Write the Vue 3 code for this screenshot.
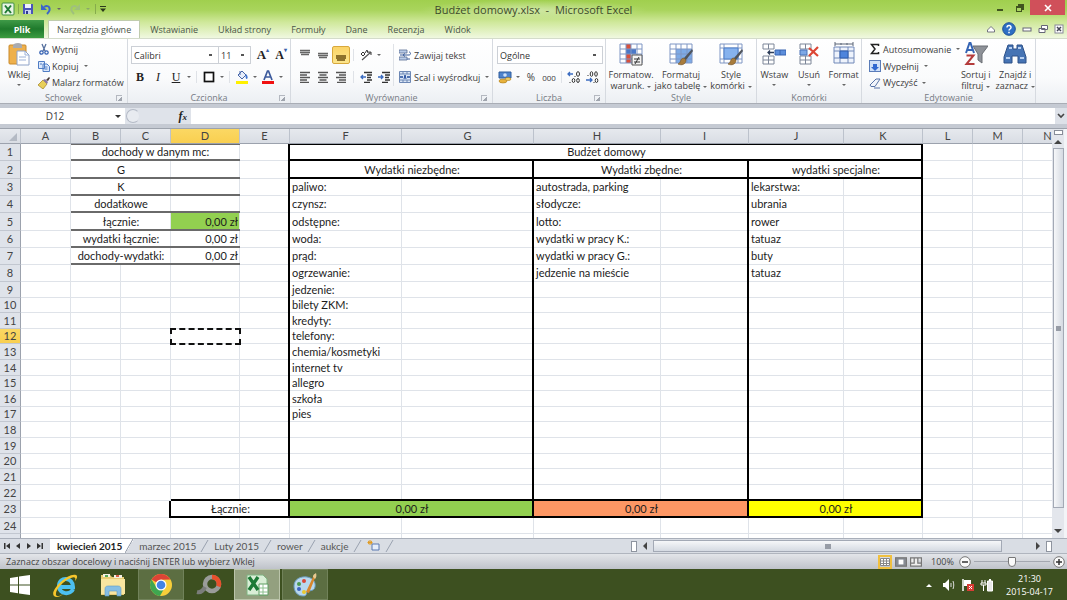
<script setup>
import { ref } from 'vue'

const menuTabs = ['Wstawianie', 'Układ strony', 'Formuły', 'Dane', 'Recenzja', 'Widok']
const sheetTabs = ['marzec 2015', 'Luty 2015', 'rower', 'aukcje']
const nameBox = ref('D12')
const formula = ref('')
const fontName = ref('Calibri')
const fontSize = ref('11')
const numberFormat = ref('Ogólne')
const zoom = ref(50)

const columns = 'ABCDEFGHIJKLMN'.split('')

const left = { 2: 'G', 3: 'K', 4: 'dodatkowe', 5: 'łącznie:', 6: 'wydatki łącznie:', 7: 'dochody-wydatki:' }
const needed = ['paliwo:', 'czynsz:', 'odstępne:', 'woda:', 'prąd:', 'ogrzewanie:', 'jedzenie:', 'bilety ZKM:', 'kredyty:', 'telefony:', 'chemia/kosmetyki', 'internet tv', 'allegro', 'szkoła', 'pies']
const extra = ['autostrada, parking', 'słodycze:', 'lotto:', 'wydatki w pracy K.:', 'wydatki w pracy G.:', 'jedzenie na mieście']
const special = ['lekarstwa:', 'ubrania', 'rower', 'tatuaz', 'buty', 'tatuaz']

const tall = [2, 5]
const low = [10, 12, 15, 17, 20]
function rowClass(n) {
  if (tall.includes(n)) return 'h18'
  if (low.includes(n)) return 'h15'
  if (n <= 8 || n === 23) return 'h17'
  return 'h16'
}

function buildRow(n) {
  const cells = [{}]
  const add = (text, span, cls) => cells.push({ text, span, cls })

  if (n === 1) add('dochody w danym mc:', 3, 'c grey-b grey-t')
  else if (n <= 7) {
    add(left[n], 2, 'c grey-b')
    add(n >= 5 ? '0,00 zł' : '', 1, n === 5 ? 'r grey-b green' : 'r grey-b')
  } else if (n === 23) {
    add('', 1, '')
    add('', 1, 'blk-r')
    add('Łącznie:', 2, 'c blk-b blk-r')
  } else {
    add('', 1, '')
    add('', 1, '')
    add('', 1, n === 12 ? 'ants' : n === 22 ? 'blk-b' : '')
  }

  if (n !== 23) add('', 1, n === 22 ? 'blk-r blk-b' : n < 23 ? 'blk-r' : '')

  if (n === 1) add('Budżet domowy', 6, 'c blk-t blk-b blk-r')
  else if (n === 2) {
    add('Wydatki niezbędne:', 2, 'c blk-b blk-r')
    add('Wydatki zbędne:', 2, 'c blk-b blk-r')
    add('wydatki specjalne:', 2, 'c blk-b blk-r')
  } else if (n === 23) {
    add('0,00 zł', 2, 'c blk-b blk-r green')
    add('0,00 zł', 2, 'c blk-b blk-r orange')
    add('0,00 zł', 2, 'c blk-b blk-r yellow')
  } else {
    const b = n === 22 ? ' blk-b' : ''
    for (const list of [needed, extra, special]) {
      add(list[n - 3] || '', 1, b)
      add('', 1, (n < 23 ? 'blk-r' : '') + b)
    }
  }
  add('', 1, '')
  add('', 1, '')
  add('', 1, '')
  return cells
}
const rows = Array.from({ length: 25 }, (_, i) => ({ n: i + 1, cls: rowClass(i + 1), cells: buildRow(i + 1) }))
</script>

<template>
  <div class="app">
    <header class="top">
      <div class="titlebar">
        <div class="quick">
          <svg class="s14" viewBox="0 0 14 14"><rect x="1" y="1" width="12" height="12" rx="1" fill="#e8f4e4" stroke="#3f8f45" /><path d="M4 3.500l6 7.500M10 3.500l-6 7.500" stroke="#1f7a34" stroke-width="2" /></svg>
          <i class="vsep"></i>
          <button aria-label="Zapisz"><svg class="s12" viewBox="0 0 12 12"><path d="M1 1h10v10H1z" fill="#4a55b8" /><path d="M3 1h6v4H3z" fill="#eef2fb" /><path d="M3 7h6v4H3z" fill="#c8d2f0" /><path d="M4 8h2v3H4z" fill="#2f3a90" /></svg></button>
          <button class="gapl" aria-label="Cofnij"><svg class="s12" viewBox="0 0 12 12"><path d="M4 4c5-3 8 2 3 7" fill="none" stroke="#3c66c8" stroke-width="2" /><path d="M1 1v6h6z" fill="#3c66c8" /></svg></button>
          <b class="dd"></b>
          <button class="gapl" aria-label="Ponów"><svg class="s12" viewBox="0 0 12 12"><path d="M8 4C3 1 0 6 5 11" fill="none" stroke="#9fc07c" stroke-width="2" /><path d="M11 1v6H5z" fill="#9fc07c" /></svg></button>
          <b class="dd pale"></b>
          <i class="vsep"></i>
          <svg class="s8" viewBox="0 0 8 8"><path d="M1 1h6v1H1zM1 3.500h6L4 7z" fill="#2c3a1c" /></svg>
        </div>
        <h1>Budżet domowy.xlsx&nbsp; - &nbsp;Microsoft Excel</h1>
        <div class="winbtns">
          <button aria-label="Minimalizuj"><svg class="s10" viewBox="0 0 10 10"><path d="M2 6h6v2H2z" fill="#40541f" /></svg></button>
          <button aria-label="Przywróć"><svg class="s10" viewBox="0 0 10 10"><path d="M3 1h6v6H7V3H3zM1 3h6v6H1z" fill="#40541f" /><path d="M2 5h4v3H2z" fill="#a9d362" /></svg></button>
          <button class="close" aria-label="Zamknij"><svg class="s10" viewBox="0 0 10 10"><path d="M2 2l6 6M8 2l-6 6" stroke="#fff" stroke-width="1.600" /></svg></button>
        </div>
      </div>
      <nav class="menu">
        <button class="file">Plik</button>
        <button class="tab active">Narzędzia główne</button>
        <button v-for="t in menuTabs" :key="t" class="tab">{{ t }}</button>
        <div class="docbtns">
          <svg class="s10" viewBox="0 0 10 10"><path d="M1.500 6L5 2.500 8.500 6v2h-7z" fill="#fff" stroke="#667" stroke-width=".9" /></svg>
          <svg class="s14" viewBox="0 0 14 14"><circle cx="7" cy="7" r="6.300" fill="#2e6fc4" stroke="#1d4f96" /><path d="M5 5.500c0-3 4.200-2.600 4 0 0 1.500-2 1.500-2 3M7 9.800v1.400" fill="none" stroke="#fff" stroke-width="1.500" /></svg>
          <svg class="s10" viewBox="0 0 10 10"><rect x="1" y="4" width="8" height="3" fill="#fff" stroke="#667" /></svg>
          <svg class="s10" viewBox="0 0 10 10"><path d="M3.500 1.500h6v4h-6zM1 4.500h6v4H1z" fill="#fff" stroke="#667" /></svg>
          <svg class="s10" viewBox="0 0 10 10"><rect x="1" y="1" width="8" height="8" fill="#fff" stroke="#889" /><path d="M3 3l4 4M7 3L3 7" stroke="#445" stroke-width="1.500" /></svg>
        </div>
      </nav>
    </header>

    <section class="ribbon">
      <div class="group g-clip">
        <div class="body">
          <button class="big">
            <svg class="s24" viewBox="0 0 24 24"><rect x="2" y="3" width="17" height="19" rx="1" fill="#eeb04c" stroke="#c98a2c" /><path d="M6 4c0-2 2-3 5-3s4 1 4 3v2H6z" fill="#a9abb0" /><path d="M10 9h8l4 4v10H10z" fill="#fff" stroke="#8ea2c8" /><path d="M18 9v4h4M12 15h7M12 18h7" fill="none" stroke="#9db2d8" /></svg>
            <span>Wklej</span><b class="dd"></b>
          </button>
          <div class="stack">
            <button><svg class="s12" viewBox="0 0 12 12"><path d="M4 1l3 7M8 1L5 8" stroke="#56709e" stroke-width="1.300" /><circle cx="3.500" cy="9.500" r="1.700" fill="none" stroke="#2e5cb0" stroke-width="1.200" /><circle cx="8.500" cy="9.500" r="1.700" fill="none" stroke="#2e5cb0" stroke-width="1.200" /></svg>Wytnij</button>
            <button><svg class="s12" viewBox="0 0 12 12"><path d="M.5 1.500h6v7h-6zM5 4h4l2.500 2.500v5H5z" fill="#dbe8fb" stroke="#4f7cc4" /><path d="M6.500 7h3M6.500 9h3M2 4h2" stroke="#4f7cc4" /></svg>Kopiuj<b class="dd"></b></button>
            <button><svg class="s12" viewBox="0 0 12 12"><path d="M0 8l5-5 4 4-4 5z" fill="#e8cf5a" stroke="#a08020" stroke-width=".7" /><path d="M5 3l2-1 3 3-1 2z" fill="#8a78a8" /><path d="M8 3l3-3 1 1-2 3z" fill="#4a3c38" /></svg>Malarz formatów</button>
          </div>
        </div>
        <footer>Schowek<i class="launch"></i></footer>
      </div>

      <div class="group g-font">
        <div class="body rows">
          <div class="line">
            <select v-model="fontName" class="combo w-font" aria-label="Czcionka"><option>Calibri</option></select>
            <select v-model="fontSize" class="combo w-size" aria-label="Rozmiar"><option>11</option></select>
            <button class="w18 serif grow">A<sup>▴</sup></button>
            <button class="w18 serif shrink">A<sup>▾</sup></button>
          </div>
          <div class="line">
            <button class="w18 serif"><b>B</b></button>
            <button class="w18 serif"><em>I</em></button>
            <button class="w18 serif"><u>U</u></button>
            <b class="dd"></b><i class="sep"></i>
            <button class="w18" aria-label="Obramowanie"><svg class="s12" viewBox="0 0 12 12"><rect x="1.500" y="1.500" width="9" height="9" fill="#fff" stroke="#111" stroke-width="1.700" /></svg></button>
            <b class="dd"></b><i class="sep"></i>
            <button class="w18" aria-label="Kolor wypełnienia"><svg class="s14" viewBox="0 0 14 14"><path d="M3 5l4-4 4 4-4 4z" fill="#e8eefb" stroke="#4766a8" /><path d="M11 4c2 2 2 4 1 5-1 0-2-1-1-5" fill="#3e73d0" /><path d="M5 1v4" stroke="#4766a8" /><rect x="1" y="11" width="12" height="3" fill="#fff000" /></svg></button>
            <b class="dd"></b>
            <button class="w18" aria-label="Kolor czcionki"><svg class="s14" viewBox="0 0 14 14"><path d="M3 10l3.500-9h1L11 10M4.500 7h5" fill="none" stroke="#3c5a9c" stroke-width="1.700" /><rect x="1" y="11" width="12" height="3" fill="#f01010" /></svg></button>
            <b class="dd"></b>
          </div>
        </div>
        <footer>Czcionka<i class="launch"></i></footer>
      </div>

      <div class="group g-align">
        <div class="body cols">
          <div class="rows">
            <div class="line">
              <button class="w18" aria-label="Do góry"><svg class="s12" viewBox="0 0 12 12"><path d="M1 1.500h10M1 3.500h10M2 5.500h8" stroke="#666" stroke-width="1.600" /></svg></button>
              <button class="w18" aria-label="Do środka"><svg class="s12" viewBox="0 0 12 12"><path d="M1 4.500h10M1 6.500h10M2 8.500h8" stroke="#666" stroke-width="1.600" /></svg></button>
              <button class="w18 on" aria-label="Do dołu"><svg class="s12" viewBox="0 0 12 12"><path d="M1 7h10M1 9h10M2 11h8" stroke="#6a4e10" stroke-width="1.600" /></svg></button>
              <i class="sep"></i>
              <button class="w18" aria-label="Orientacja"><svg class="s12" viewBox="0 0 12 12"><path d="M2 11l9-8M11 3H8M11 3v3" fill="none" stroke="#555" stroke-width="1.200" /><path d="M1 5l2-2 2 2-2 2zM5 4l2-3 1 3" fill="none" stroke="#333" /></svg></button>
              <b class="dd"></b>
            </div>
            <div class="line">
              <button class="w18" aria-label="Do lewej"><svg class="s12" viewBox="0 0 12 12"><path d="M1 1.500h10M1 4h7M1 6.500h10M1 9h7M1 11.500h9" stroke="#555" stroke-width="1.400" /></svg></button>
              <button class="w18" aria-label="Wyśrodkuj"><svg class="s12" viewBox="0 0 12 12"><path d="M1 1.500h10M2.500 4h7M1 6.500h10M2.500 9h7M1 11.500h10" stroke="#555" stroke-width="1.400" /></svg></button>
              <button class="w18" aria-label="Do prawej"><svg class="s12" viewBox="0 0 12 12"><path d="M1 1.500h10M4 4h7M1 6.500h10M4 9h7M2 11.500h9" stroke="#555" stroke-width="1.400" /></svg></button>
              <i class="sep"></i>
              <button class="w18" aria-label="Zmniejsz wcięcie"><svg class="s12" viewBox="0 0 12 12"><path d="M4 1.500h8M7 4h5M7 6.500h4M7 9h5M4 11.500h6" stroke="#333" stroke-width="1.400" /><path d="M6 6H1M3 4L1 6l2 2" fill="none" stroke="#3a6bc0" stroke-width="1.300" /></svg></button>
              <button class="w18" aria-label="Zwiększ wcięcie"><svg class="s12" viewBox="0 0 12 12"><path d="M4 1.500h8M7 4h5M7 6.500h4M7 9h5M4 11.500h6" stroke="#333" stroke-width="1.400" /><path d="M0 6h5M3 4l2 2-2 2" fill="none" stroke="#3a6bc0" stroke-width="1.300" /></svg></button>
            </div>
          </div>
          <i class="sep tallsep"></i>
          <div class="rows">
            <button class="line txt"><svg class="s12" viewBox="0 0 12 12"><path d="M0 1h8v3H0zM0 8h8v3H0z" fill="#b8cbe8" stroke="#5b6f94" stroke-width=".8" /><path d="M1 6h9c2 0 2-3 0-3M8 10h3M6 4.500L4 6l2 1.500" fill="none" stroke="#3c5f9c" /></svg>Zawijaj tekst</button>
            <button class="line txt"><svg class="s12" viewBox="0 0 12 12"><path d="M.5.500h11v11H.500zM0 3h12M0 9h12M4 0v3M8 0v3M4 9v3M8 9v3" fill="#dbe6f6" stroke="#6c87b4" /><path d="M1 6h3M8 6h3" stroke="#224c9c" stroke-width="1.400" /><path d="M5 8l1-4 1 4" fill="none" stroke="#224c9c" /></svg>Scal i wyśrodkuj<b class="dd"></b></button>
          </div>
        </div>
        <footer>Wyrównanie<i class="launch"></i></footer>
      </div>

      <div class="group g-num">
        <div class="body rows">
          <div class="line"><select v-model="numberFormat" class="combo wide" aria-label="Format liczb"><option>Ogólne</option></select></div>
          <div class="line">
            <button class="w18" aria-label="Format księgowy"><svg class="s14" viewBox="0 0 14 14"><path d="M1 2h12v6H1z" fill="#4f83cc" stroke="#2e5c9c" /><circle cx="7" cy="5" r="1.800" fill="#cfe0f6" /><ellipse cx="5" cy="11" rx="4" ry="2" fill="#e8b23c" stroke="#a87818" stroke-width=".6" /><ellipse cx="10" cy="9" rx="3" ry="1.500" fill="#f2cf6a" stroke="#a87818" stroke-width=".6" /></svg></button>
            <b class="dd"></b>
            <button class="w18 num">%</button>
            <button class="w18 num small">000</button>
            <i class="sep"></i>
            <button class="w18" aria-label="Zwiększ dziesiętne"><svg class="s14" viewBox="0 0 14 14"><path d="M6 4H1M3 2L1 4l2 2" fill="none" stroke="#3a6bc0" stroke-width="1.300" /><path d="M8 6V7" stroke="#333" /><ellipse cx="11" cy="4" rx="1.500" ry="2.300" fill="none" stroke="#333" /><ellipse cx="6.500" cy="10.500" rx="1.300" ry="2" fill="none" stroke="#333" /><ellipse cx="11" cy="10.500" rx="1.300" ry="2" fill="none" stroke="#333" /><path d="M3 12v1" stroke="#333" /></svg></button>
            <button class="w18" aria-label="Zmniejsz dziesiętne"><svg class="s14" viewBox="0 0 14 14"><path d="M1 10h6M5 8l2 2-2 2" fill="none" stroke="#3a6bc0" stroke-width="1.300" /><ellipse cx="6.500" cy="4" rx="1.300" ry="2.300" fill="none" stroke="#333" /><ellipse cx="11" cy="4" rx="1.300" ry="2.300" fill="none" stroke="#333" /><ellipse cx="11.500" cy="10.500" rx="1.300" ry="2" fill="none" stroke="#333" /><path d="M3 5v1M9 12v1" stroke="#333" /></svg></button>
          </div>
        </div>
        <footer>Liczba<i class="launch"></i></footer>
      </div>

      <div class="group g-style">
        <div class="body">
          <button class="big"><svg class="s24" viewBox="0 0 24 24"><path d="M1 2h22v19H1z" fill="#fff" /><path d="M7 2h5v5H7zM7 12h5v9H7z" fill="#d8503c" /><path d="M7 7h10v5H7z" fill="#4a78c8" /><path d="M1 2h22v19H1zM1 7h22M1 12h22M1 17h22M7 2v19M12 2v19M18 2v19" fill="none" stroke="#7e96c4" /><path d="M13 13h10v10H13z" fill="#f4f4f4" stroke="#555" /><path d="M15 17h6M15 20h6M20 15l-4 7" stroke="#333" /></svg><span>Formatow.</span><span>warunk.<b class="dd"></b></span></button>
          <button class="big"><svg class="s24" viewBox="0 0 24 24"><path d="M1 2h22v19H1z" fill="#fff" /><path d="M7 7h16v14H7z" fill="#7daae6" /><path d="M1 2h22v19H1zM1 7h22M1 12h22M1 17h22M7 2v19M12 2v19M18 2v19" fill="none" stroke="#7e96c4" /><path d="M23 7l-8 9 2 2 7-9z" fill="#50555e" /><path d="M15 16c-4 0-3 5-6 6 4 2 8 0 8-4z" fill="#a87c3c" stroke="#6a4c20" stroke-width=".6" /></svg><span>Formatuj</span><span>jako tabelę<b class="dd"></b></span></button>
          <button class="big"><svg class="s24" viewBox="0 0 24 24"><path d="M1 2h22v19H1z" fill="#fff" /><path d="M1 2h22v19H1zM1 6h22M1 17h22M5 2v19M19 2v19" fill="none" stroke="#7e96c4" /><path d="M5 6h14v11H5z" fill="#86b2ee" stroke="#4f7fc8" /><path d="M23 7l-8 9 2 2 7-9z" fill="#50555e" /><path d="M15 16c-4 0-3 5-6 6 4 2 8 0 8-4z" fill="#a87c3c" stroke="#6a4c20" stroke-width=".6" /></svg><span>Style</span><span>komórki<b class="dd"></b></span></button>
        </div>
        <footer>Style</footer>
      </div>

      <div class="group g-cells">
        <div class="body">
          <button class="big"><svg class="s24" viewBox="0 0 24 24"><path d="M1 2h11v5H1zM6.500 2v5M1 14h11v8H1zM1 18h11M6.500 14v8" fill="#fff" stroke="#7c8698" /><path d="M13 8h11v5H13zM18 8v5" fill="#5c8edb" stroke="#3864b0" /><path d="M12 10.500H6M8 8.500l-2 2 2 2" fill="none" stroke="#2c3c58" stroke-width="1.300" /></svg><span>Wstaw</span><b class="dd"></b></button>
          <button class="big"><svg class="s24" viewBox="0 0 24 24"><path d="M3 2h11v5H3zM8.500 2v5M3 14h11v8H3zM3 18h11M8.500 14v8" fill="#fff" stroke="#7c8698" /><path d="M3 8h7v5H3z" fill="#7da8e6" stroke="#4a72b8" /><path d="M12 6l9 8M21 5l-9 9" stroke="#dc4634" stroke-width="2.200" /></svg><span>Usuń</span><b class="dd"></b></button>
          <button class="big"><svg class="s24" viewBox="0 0 24 24"><path d="M2 5h20v16H2zM2 9h20M2 16h20M8 5v16M16 5v16" fill="#eef3fc" stroke="#7088b8" /><path d="M8 9h8v7H8z" fill="#4e84dc" stroke="#2e5cac" /><path d="M3 2h18M3 0v4M21 0v4M9 1v2M15 1v2" stroke="#5c6678" /></svg><span>Format</span><b class="dd"></b></button>
        </div>
        <footer>Komórki</footer>
      </div>

      <div class="group g-edit">
        <div class="body">
          <div class="stack">
            <button><svg class="s12" viewBox="0 0 12 12"><path d="M9.500 3V1.500H2.500L6 6l-3.500 4.500h7V9" fill="none" stroke="#222" stroke-width="1.500" /></svg>Autosumowanie<b class="dd"></b></button>
            <button><svg class="s12" viewBox="0 0 12 12"><rect x=".5" y=".5" width="11" height="11" fill="#cfe0f8" stroke="#5a7cb8" /><path d="M4 4h4v3h2L6 11 2 7h2z" fill="#2f68d0" /></svg>Wypełnij<b class="dd"></b></button>
            <button><svg class="s12" viewBox="0 0 12 12"><path d="M1 8l6-6h4L6 9.500H2z" fill="#f2f5fb" stroke="#5874a8" /><path d="M5 11h6" stroke="#5874a8" /></svg>Wyczyść<b class="dd"></b></button>
          </div>
          <button class="big"><svg class="s24" viewBox="0 0 24 24"><path d="M9 4h15l-6 8v9l-4-3v-6z" fill="#8e9298" stroke="#6a6e74" /><path d="M2 11L5.500 1h1L10 11M3.500 8h5" fill="none" stroke="#3464b4" stroke-width="2" /><path d="M2.500 13.500h7L2.500 22h8" fill="none" stroke="#b43c3c" stroke-width="2" /></svg><span>Sortuj i</span><span>filtruj<b class="dd"></b></span></button>
          <button class="big"><svg class="s24" viewBox="0 0 24 24"><path d="M5 3h5v4h4V3h5l4 12v6h-8v-7H9v7H1v-6z" fill="#4674b4" stroke="#2c5088" /><path d="M3 16h4M17 16h4M6 6h3M15 6h3" stroke="#b8d0f0" stroke-width="2" /></svg><span>Znajdź i</span><span>zaznacz<b class="dd"></b></span></button>
        </div>
        <footer>Edytowanie</footer>
      </div>
    </section>

    <section class="formulabar">
      <input v-model="nameBox" class="namebox" aria-label="Pole nazwy" /><div class="nd"><b class="dd dark"></b></div>
      <div class="fxzone"><i class="knob"></i><span class="fx">f<small>x</small></span></div>
      <input v-model="formula" class="fxinput" aria-label="Pasek formuły" />
      <button class="expand" aria-label="Rozwiń"><svg class="s8" viewBox="0 0 8 8"><path d="M1 2l3 3 3-3" fill="none" stroke="#444" stroke-width="1.600" /></svg></button>
    </section>

    <main class="sheet">
      <div class="gridwrap">
        <table>
          <colgroup>
            <col class="k21" /><col class="k50" /><col class="k50" /><col class="k50" /><col class="k69" /><col class="k50" />
            <col class="k112" /><col class="k132" /><col class="k127" /><col class="k88" /><col class="k95" /><col class="k79" />
            <col class="k50" /><col class="k50" /><col class="k50" />
          </colgroup>
          <thead>
            <tr>
              <th class="corner"><svg class="s8" viewBox="0 0 8 8"><path d="M8 0v8H0z" fill="#b4bac4" /></svg></th>
              <th v-for="c in columns" :key="c" :class="{ sel: c === 'D' }">{{ c }}</th>
            </tr>
          </thead>
          <tbody>
            <tr v-for="r in rows" :key="r.n" :class="r.cls">
              <th :class="{ sel: r.n === 12 }">{{ r.n }}</th>
              <td v-for="(c, i) in r.cells" :key="i" :colspan="c.span || 1" :class="c.cls">{{ c.text }}</td>
            </tr>
          </tbody>
        </table>
      </div>
      <div class="vscroll">
        <i class="split"></i>
        <svg class="s10" viewBox="0 0 10 10"><path d="M1 7l4-4 4 4z" fill="#444" /></svg>
        <div class="vthumb"><i></i></div>
        <svg class="s10 down" viewBox="0 0 10 10"><path d="M1 3l4 4 4-4z" fill="#444" /></svg>
      </div>
    </main>

    <section class="tabsbar">
      <div class="navs">
        <button aria-label="Pierwszy"><svg class="s8" viewBox="0 0 8 8"><path d="M1 1h1.500v6H1zM7 1v6L3 4z" fill="#333" /></svg></button>
        <button aria-label="Poprzedni"><svg class="s8" viewBox="0 0 8 8"><path d="M6 1v6L2 4z" fill="#333" /></svg></button>
        <button aria-label="Następny"><svg class="s8" viewBox="0 0 8 8"><path d="M2 1v6l4-3z" fill="#333" /></svg></button>
        <button aria-label="Ostatni"><svg class="s8" viewBox="0 0 8 8"><path d="M1 1v6l4-3zM5.500 1H7v6H5.500z" fill="#333" /></svg></button>
      </div>
      <button class="stab cur">kwiecień 2015</button>
      <svg class="slant" viewBox="0 0 10 14"><path d="M0 14L8 0" stroke="#8e96a4" /></svg>
      <template v-for="t in sheetTabs" :key="t">
        <button class="stab">{{ t }}</button>
        <svg class="slant" viewBox="0 0 10 14"><path d="M1 13L8 1" stroke="#9aa2b0" /></svg>
      </template>
      <button class="stab" aria-label="Wstaw arkusz"><svg class="s14" viewBox="0 0 14 14"><path d="M5 5h7v6H5z" fill="#e6eefb" stroke="#5a78b0" /><path d="M3 1v5M.5 3.500h5M1 2l4 3M5 2L1 5" stroke="#e09a20" /></svg></button>
      <svg class="slant" viewBox="0 0 10 14"><path d="M1 13L8 1" stroke="#9aa2b0" /></svg>
      <div class="hscroll">
        <i class="grab"></i>
        <svg class="s10" viewBox="0 0 10 10"><path d="M7 1v8L3 5z" fill="#444" /></svg>
        <div class="htrack"><div class="hthumb"><i></i></div></div>
        <svg class="s10" viewBox="0 0 10 10"><path d="M3 1v8l4-4z" fill="#444" /></svg>
        <i class="grab"></i>
      </div>
    </section>

    <footer class="status">
      <span>Zaznacz obszar docelowy i naciśnij ENTER lub wybierz Wklej</span>
      <div class="views">
        <button class="von" aria-label="Normalny"><svg class="s10" viewBox="0 0 10 10"><path d="M.5 1.500h9v7h-9zM0 4h10M0 6.500h10M3.500 1v8M6.500 1v8" fill="#fff" stroke="#888" /></svg></button>
        <button aria-label="Układ strony"><svg class="s12" viewBox="0 0 10 10"><rect x=".5" y="1.500" width="9" height="7" fill="#888c94" stroke="#777" /><rect x="3" y="3" width="4" height="4" fill="#fff" /></svg></button>
        <button aria-label="Podział stron"><svg class="s12" viewBox="0 0 10 10"><path d="M.5 1.500h9v7h-9zM3.500 1v5H0M6.500 1v5H10" fill="#eee" stroke="#777" /></svg></button>
        <span class="pct">100%</span>
        <button aria-label="Pomniejsz"><svg class="s12" viewBox="0 0 12 12"><circle cx="6" cy="6" r="5.300" fill="#fafafa" stroke="#777" /><path d="M3 6h6" stroke="#333" stroke-width="1.500" /></svg></button>
        <input v-model="zoom" type="range" min="0" max="100" aria-label="Powiększenie" />
        <button aria-label="Powiększ"><svg class="s12" viewBox="0 0 12 12"><circle cx="6" cy="6" r="5.300" fill="#fafafa" stroke="#777" /><path d="M3 6h6M6 3v6" stroke="#333" stroke-width="1.500" /></svg></button>
      </div>
    </footer>

    <footer class="taskbar">
      <button aria-label="Start"><svg class="s24" viewBox="0 0 24 24"><path d="M2 5l8-1.200V11.500H2zM11 3.600L22 2v9.500H11zM2 12.500h8v7.700L2 19zM11 12.500h11V22l-11-1.600z" fill="#fff" /></svg></button>
      <button aria-label="Internet Explorer"><svg class="s28" viewBox="0 0 28 28"><path d="M22 18c-2 6-14 6-14-3 0-10 14-9 14 1H9" fill="none" stroke="#4cc0f0" stroke-width="4" /><path d="M3 25c-5-5 14-24 22-21 2 1 1 4-1 6 1-3 0-5-4-3C12 10 4 19 5 24c1 2 4 1 7-1-3 3-7 4-9 2z" fill="#f6c62c" /></svg></button>
      <button aria-label="Eksplorator"><svg class="s28" viewBox="0 0 28 28"><path d="M2 4h9l2 2h12v18H2z" fill="#e9cd74" /><path d="M4 3h7v3H4zM15 4h8v3h-8z" fill="#f4f1e4" /><path d="M6 4h3v2H6z" fill="#58a858" /><path d="M17 4h3v2h-3z" fill="#d86048" /><path d="M2 8h24v15H2z" fill="#f8e6a0" /><path d="M6 25v-7c0-2 1-3 3-3h10c2 0 3 1 3 3v7h-4v-5h-8v5z" fill="#86bfe4" stroke="#5c9cc8" stroke-width=".6" /></svg></button>
      <button class="tile" aria-label="Chrome"><svg class="s24" viewBox="0 0 24 24"><circle cx="12" cy="12" r="11" fill="#f7ce3a" /><path d="M12 12L2.500 6.500A11 11 0 0 1 21.500 6.500L12 6.800z" fill="#dc4436" /><path d="M2.500 6.500A11 11 0 0 0 11 23l5-9-8 1z" fill="#3fa650" /><circle cx="12" cy="12" r="5.500" fill="#fff" /><circle cx="12" cy="12" r="4.300" fill="#4284e4" /></svg></button>
      <button aria-label="Program"><svg class="s28" viewBox="0 0 28 28"><circle cx="17" cy="13" r="7" fill="none" stroke="#9a9c9a" stroke-width="4.500" /><path d="M17 6a7 7 0 0 1 6.500 9.500" fill="none" stroke="#e8502c" stroke-width="4.500" /><path d="M2 21c4 1 6-1 8-5" fill="none" stroke="#7b7d7a" stroke-width="4" /></svg></button>
      <button class="tile act" aria-label="Excel"><svg class="s24" viewBox="0 0 24 24"><path d="M2 2h16l4 4v16H2z" fill="#d9eed6" stroke="#7fb482" /><path d="M14 11h9v11h-9z" fill="#fff" stroke="#5c9c60" /><path d="M14 15h9M14 19h9M18 11v11" stroke="#8cc08e" /><path d="M4 4l9 13M13 4L4 17" stroke="#1d7a36" stroke-width="3.400" /></svg></button>
      <button class="tile" aria-label="Paint"><svg class="s24" viewBox="0 0 24 24"><path d="M1 13C1 6 8 3 14 4s9 5 8 10-7 3-8 5 0 4-4 4c-6 0-9-5-9-10z" fill="#b8d8ee" stroke="#6a9cc0" /><circle cx="6" cy="11" r="2" fill="#4c9a50" /><circle cx="11" cy="8" r="2" fill="#d84838" /><circle cx="6" cy="16" r="2" fill="#3c64c0" /><circle cx="11" cy="19" r="2" fill="#e8c830" /><path d="M13 19L20 4l2 1-6 15z" fill="#d8862c" /><path d="M20 4c0-3 2-3 3-4 1 3 0 5-1 6z" fill="#e8c890" /></svg></button>
      <div class="tray">
        <svg class="s8" viewBox="0 0 8 8"><path d="M1 6l3-3 3 3z" fill="#fff" /></svg>
        <svg class="s14 spk" viewBox="0 0 14 14"><path d="M1 5h2l4-4v12L3 9H1z" fill="#fff" /><path d="M9 5v4M11 3c1 3 1 5 0 8" fill="none" stroke="#ddd" /></svg>
        <svg class="s14" viewBox="0 0 14 14"><path d="M2 1v12" stroke="#fff" stroke-width="1.500" /><path d="M3 2h7v6H3z" fill="#fff" /><rect x="6" y="6" width="7" height="7" fill="#d83c34" /><path d="M8 8l3 3M11 8l-3 3" stroke="#fff" /></svg>
        <svg class="s14" viewBox="0 0 14 14"><path d="M2 2v3M5 2v3M1 5h5v2H1zM3.500 7v6" fill="none" stroke="#fff" /><path d="M7.500 3h5v10h-5z" fill="#e8e8e8" stroke="#fff" /><path d="M9 1h2v2H9z" fill="#fff" /></svg>
        <div class="clock"><span>21:30</span><span>2015-04-17</span></div>
      </div>
    </footer>
  </div>
</template>

<style>
html, body { margin: 0; overflow: hidden; }
</style>

<style scoped>
.app { height: 100vh; display: flex; flex-direction: column; font-family: "Open Sans", "Noto Sans", sans-serif; font-size: 9px; color: #3c3c3c; background: #fff; }
.app * { box-sizing: border-box; }
button { border: 0; background: none; padding: 0; margin: 0; font: inherit; color: inherit; display: flex; align-items: center; white-space: nowrap; }
input { font: inherit; color: inherit; border: 0; margin: 0; padding: 0; min-width: 0; outline: 0; }
svg { display: block; flex: none; }
.s8 { width: 8px; height: 8px; }
.s10 { width: 10px; height: 10px; }
.s12 { width: 12px; height: 12px; }
.s14 { width: 14px; height: 14px; }
.s24 { width: 24px; height: 24px; }
.s28 { width: 28px; height: 28px; }
.dd { display: inline-block; flex: none; border: 2px solid transparent; border-top-color: #666; border-bottom: 0; margin: 0 3px; vertical-align: middle; }
.dd.dark { border-width: 3px; border-top-color: #333; border-bottom: 0; margin: 0; }
.dd.pale { border-top-color: #8aa86a; }

.top { flex: none; background: linear-gradient(#a0cf4e 0, #a9d45c 10px, #cfe89a 22px, #f0f8e0 38px); }
.titlebar { height: 20px; display: grid; grid-template-columns: 1fr auto 1fr; align-items: start; }
.quick { display: flex; align-items: center; gap: 3px; padding: 2px 0 0 1px; }
.quick .dd { margin: 0 2px; }
.gapl { margin-left: 3px; }
.vsep { width: 1px; height: 10px; background: #86ac4c; }
h1 { margin: 0; font-size: 11px; font-weight: 400; line-height: 20px; color: #3d4a2c; padding: 0 16px; background: radial-gradient(closest-side, #ffffff70, #ffffff00); }
.winbtns { display: flex; justify-content: flex-end; padding-right: 2px; }
.winbtns button { width: 20px; height: 15px; justify-content: center; }
.winbtns .close { width: 35px; background: #d0505a; }
.menu { display: flex; height: 18px; }
.file { width: 44px; justify-content: center; color: #fff; font-weight: 700; background: linear-gradient(#3f9a48, #1f7a2c 50%, #3c9c40); margin-right: 4px; }
.tab { padding: 0 10px; color: #4a5548; }
.tab.active { background: #fff; padding: 0 8px; border: 1px solid #c0ccae; border-bottom: 0; }
.docbtns { margin-left: auto; display: flex; align-items: center; gap: 6px; padding-right: 3px; }

.ribbon { flex: none; height: 66px; display: flex; background: linear-gradient(#fff, #fafbfc 60%, #eceff3); border-top: 1px solid #d4dccb; border-bottom: 1px solid #a9adb5; }
.group { flex: none; border-right: 1px solid #d6dae0; display: flex; flex-direction: column; }
.group footer { height: 12px; line-height: 13px; text-align: center; color: #767b84; display: grid; grid-template-columns: 1fr auto 1fr; }
.group footer::before { content: ""; }
.launch { width: 6px; height: 6px; border: 1px solid #b4b8c0; border-width: 1px 0 0 1px; justify-self: end; align-self: center; margin-right: 5px; background: linear-gradient(135deg, transparent 60%, #a0a5ae 60%); }
.body { flex: 1; display: flex; min-height: 0; padding-top: 2px; }
.g-clip { width: 128px; }
.g-font { width: 163px; }
.g-align { width: 202px; }
.g-num { width: 113px; }
.g-style { width: 151px; }
.g-cells { width: 105px; }
.g-edit { width: 174px; }
.big { flex: 1; flex-direction: column; line-height: 11px; min-width: 0; }
.big svg { margin: 1px 0 3px; }
.big > .dd { margin-top: 4px; }
.big span { display: block; height: 11px; }
.big span .dd { margin-right: 0; }
.g-clip .big { flex: none; width: 38px; }
.stack { display: flex; flex-direction: column; }
.stack button { height: 17px; gap: 2px; }
.g-edit .stack { width: 94px; padding-left: 7px; }
.rows { flex-direction: column; padding-top: 5px; }
.rows.body { padding: 7px 0 0 3px; }
.body.cols { padding: 2px 0 0 5px; }
.line { display: flex; align-items: center; height: 18px; margin-bottom: 4px; }
.line .dd { margin: 0 2px; }
.line.txt { gap: 3px; }
.combo { appearance: none; border: 1px solid #ccd0d6; border-radius: 0; height: 18px; font: inherit; color: #333; margin: 0; padding: 0 2px; background: #fff linear-gradient(#555, #555) no-repeat right 6px center / 3px 2px; outline: 0; }
.w-font { width: 88px; }
.w-size { width: 33px; margin-left: -1px; }
.combo.wide { width: 106px; margin-left: 1px; }
.w18 { width: 18px; height: 18px; justify-content: center; }
.serif { font-family: "Liberation Serif", serif; font-size: 12px; color: #222; }
.grow { font-size: 13px; font-weight: 700; margin-left: 3px; }
.shrink { font-weight: 700; }
.serif sup { font-size: 6px; align-self: flex-start; line-height: 8px; color: #3a62ac; }
.sep { width: 1px; height: 12px; background: #dfe2e7; margin: 0 3px; flex: none; }
.tallsep { height: 42px; margin: 3px 5px 0 auto; }
.cols .rows:last-child { width: 93px; flex: none; }
.on { background: linear-gradient(#fbd467, #fce58c); border: 1px solid #d8a83c; border-radius: 2px; }
.num { font-size: 10px; }
.num.small { font-size: 8px; }

.formulabar { flex: none; height: 24px; display: flex; padding: 4px 0; background: #c5cad3; }
.namebox { width: 110px; text-align: center; background: #fff; font-size: 10px; }
.nd { width: 15px; background: #fff; display: flex; align-items: center; justify-content: center; }
.fxzone { width: 66px; background: #dfe3ea; display: flex; align-items: center; justify-content: space-between; padding: 0 4px 0 1px; }
.knob { width: 14px; height: 14px; border: 1px solid #b4bac6; border-right-color: #dfe3ea; border-radius: 7px; background: #e8ebf0; }
.fx { font: italic 700 12px "Liberation Serif", serif; color: #222; }
.fx small { font-size: 9px; }
.fxinput { flex: 1; background: #fff; }
.expand { width: 12px; justify-content: center; background: #dde1e8; }

.sheet { flex: 1 1 0; min-height: 0; display: flex; border-top: 1px solid #9da3ad; }
.gridwrap { flex: 1; min-width: 0; overflow: hidden; background: #fff; }
table { table-layout: fixed; width: 1073px; border-collapse: separate; border-spacing: 0; font-family: Lato, "Noto Sans", sans-serif; font-size: 11px; line-height: 13px; color: #1c1c1c; }
.k21 { width: 21px; } .k50 { width: 50px; } .k69 { width: 69px; } .k112 { width: 112px; } .k132 { width: 132px; }
.k127 { width: 127px; } .k88 { width: 88px; } .k95 { width: 95px; } .k79 { width: 79px; }
th { font-weight: 400; color: #444; padding: 0 0 1px; background: #dfe3ea; border-right: 1px solid #bcc2cc; border-bottom: 1px solid #c2c7d0; }
thead th { height: 15px; border-bottom-color: #9ca2ad; background: linear-gradient(#e6e9ee, #d9dde4); }
tbody th { border-right-color: #9ca2ad; }
th.sel { background: linear-gradient(#fbd863, #f9cf50); }
thead .corner svg { margin: 2px 3px 0 auto; }
td {
  --right: inset 0 0 transparent;
  --bottom: inset 0 0 transparent;
  --top: inset 0 0 transparent;
  padding: 0 2px 2px;
  white-space: nowrap;
  box-shadow: var(--right), var(--bottom), var(--top), inset -1px 0 #dfe3e9, inset 0 -1px #dfe3e9;
}
.h15 { height: 15px; } .h16 { height: 16px; } .h17 { height: 17px; } .h18 { height: 18px; }
.c { text-align: center; }
.r { text-align: right; }
.grey-b { --bottom: inset 0 -2px #6a6a6a; }
.grey-t { --top: inset 0 1px #6a6a6a; }
.blk-b { --bottom: inset 0 -2px #000; }
.blk-t { --top: inset 0 1px #000; }
.blk-r { --right: inset -2px 0 #000; }
.green { background: #92d050; }
.orange { background: #fd9764; }
.yellow { background: #ff0; }
.ants { outline: 2px dashed #111; outline-offset: -1px; }
.vscroll { width: 15px; flex: none; background: #e3e6ec; border-right: 3px solid #f2f4f7; display: flex; flex-direction: column; align-items: center; }
.split { width: 9px; height: 5px; border: 1px solid #888e99; background: #fff; margin: 1px 0 2px; }
.vthumb { width: 11px; flex: 1; margin: 1px 0 18px; border: 1px solid #a3a9b5; background: linear-gradient(90deg, #f6f7f9, #d5dae2); display: flex; align-items: center; justify-content: center; }
.vthumb i { width: 5px; height: 5px; background: #979ca6; }
.down { margin-bottom: 2px; }

.tabsbar { flex: none; height: 15px; display: flex; align-items: center; background: #d9dde4; border-top: 1px solid #a9afba; font-family: Lato, "Noto Sans", sans-serif; font-size: 10px; color: #555; }
.navs { display: flex; width: 50px; gap: 3px; padding-left: 3px; }
.stab { height: 14px; padding: 0 4px; }
.stab.cur { background: #fff; padding: 0 3px 0 7px; color: #222; font-weight: 700; }
.stab.cur + .slant { background: linear-gradient(120deg, #fff 50%, transparent 50%); }
.slant { width: 10px; height: 14px; }
.hscroll { width: 421px; margin: 0 15px 0 auto; display: flex; align-items: center; gap: 3px; }
.grab { width: 6px; height: 11px; border: 1px solid #8e949f; background: #fff; }
.htrack { flex: 1; padding-right: 28px; }
.hthumb { height: 12px; border: 1px solid #a3a9b5; background: linear-gradient(#f6f7f9, #d5dae2); display: flex; align-items: center; justify-content: center; }
.hthumb i { width: 6px; height: 5px; background: #979ca6; }

.status { flex: none; height: 16px; display: flex; align-items: center; justify-content: space-between; padding: 0 2px 0 6px; background: linear-gradient(#e3e5e9, #bfc3ca); border-top: 1px solid #b0b5be; color: #444; }
.views { display: flex; align-items: center; gap: 3px; }
.views .von { border: 2px solid #f0c040; }
.pct { width: 24px; margin: 0 1px 0 6px; }
.views input { appearance: none; width: 76px; height: 12px; background: linear-gradient(#a4a8b0, #a4a8b0) no-repeat center / 100% 1px; }
.views input::-webkit-slider-thumb { appearance: none; width: 8px; height: 10px; border: 1px solid #777; border-radius: 1px 1px 4px 4px; background: #fafafa; }

.taskbar { flex: none; height: 31px; display: flex; background: #3d5020; color: #fff; padding-right: 14px; }
.taskbar > button { width: 46px; margin-right: 2px; justify-content: center; }
.taskbar > button:first-child { width: 40px; }
.taskbar .tile { background: #5c6e42; border: 1px solid #71825a; }
.taskbar .act { background: #93a07f; border-color: #bac4aa; }
.tray { margin-left: auto; display: flex; align-items: center; gap: 5px; }
.spk { margin-left: 4px; }
.clock { display: flex; flex-direction: column; align-items: center; line-height: 13px; margin-left: 7px; }
</style>
